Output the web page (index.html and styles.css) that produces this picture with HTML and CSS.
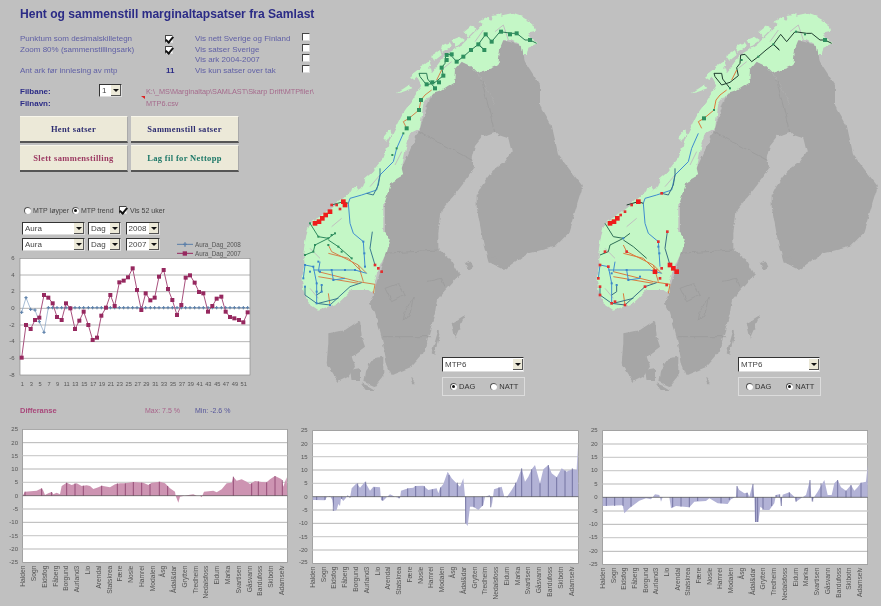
FILE: index.html
```html
<!DOCTYPE html>
<html lang="no">
<head>
<meta charset="utf-8">
<title>Hent og sammenstill marginaltapsatser fra Samlast</title>
<link rel="stylesheet" href="styles.css">
</head>
<body>
<svg class="defs" width="0" height="0" aria-hidden="true">
  <defs>
    <filter id="rough" x="-5%" y="-5%" width="110%" height="110%" color-interpolation-filters="sRGB">
      <feTurbulence type="fractalNoise" baseFrequency="0.045" numOctaves="3" seed="7" result="noise"/>
      <feDisplacementMap in="SourceGraphic" in2="noise" scale="13" xChannelSelector="R" yChannelSelector="G"/>
    </filter>
    <marker id="n-green" markerUnits="userSpaceOnUse" markerWidth="14" markerHeight="14" refX="7" refY="7"><rect x="1" y="1" width="12" height="12" fill="#2f8f5f"/></marker>
    <marker id="n-green-s" markerUnits="userSpaceOnUse" markerWidth="8" markerHeight="8" refX="4" refY="4"><rect x="1" y="1" width="6" height="6" fill="#2f8f5f"/></marker>
    <marker id="n-blue" markerUnits="userSpaceOnUse" markerWidth="8" markerHeight="8" refX="4" refY="4"><rect x="1" y="1" width="6" height="6" fill="#3a86c8"/></marker>
    <marker id="n-red" markerUnits="userSpaceOnUse" markerWidth="16" markerHeight="16" refX="8" refY="8"><rect x="1" y="1" width="14" height="14" fill="#ee1c1c"/></marker>
    <marker id="n-red-s" markerUnits="userSpaceOnUse" markerWidth="10" markerHeight="10" refX="5" refY="5"><rect x="1" y="1" width="8" height="8" fill="#e03030"/></marker>
    <marker id="pt-blue" markerUnits="userSpaceOnUse" markerWidth="12" markerHeight="12" refX="6" refY="6"><path d="M6 1V11M1 6H11" stroke="#5a7ea8" stroke-width="3"/></marker>
    <marker id="pt-red" markerUnits="userSpaceOnUse" markerWidth="14" markerHeight="14" refX="7" refY="7"><rect x="1" y="1" width="12" height="12" fill="#96285f"/></marker>

    <g id="land">
      <g filter="url(#rough)">
        <path class="land" d="M500 170L520 180 545 205 560 225 575 250 600 300 600 380 560 395 540 420 530 460 540 490 490 555 440 615 430 685 430 735 470 765 495 810 445 865 425 890 420 925 385 1045 350 1085 290 1110 275 1075 260 995 240 925 225 895 235 865 270 750 270 555 320 490 375 370 410 265Z"/>
        <path class="land" d="M620 105L680 120 690 170 735 240 735 300 770 360 790 450 860 540 860 555 820 685 780 725 700 745 630 795 580 770 565 715 545 605 545 570 560 540 590 500 630 470 650 440 640 400 610 390 600 380 600 300 575 250 560 225 545 205 575 195 610 180 615 130Z"/>
        <path class="land-dk" d="M100 1015L100 985 150 975 195 945 200 995 210 1025 170 1055 180 1085 160 1115 130 1130 95 1075Z"/>
        <path class="land-dk" d="M165 1095L195 1090 195 1125 170 1125Z"/>
        <path class="land-dk" d="M210 1095L235 1060 265 1055 265 1115 240 1145 205 1130Z"/>
        <path class="land-dk" d="M200 1135L225 1145 240 1155 215 1155Z"/>
        <path class="land-dk" d="M345 1115L360 1135 350 1135Z"/>
        <path class="land" d="M470 955L510 930 480 1000Z"/>
        <path class="land" d="M410 1045L430 975 435 980 418 1050Z"/>
        <path class="land" d="M510 775L525 765 535 785 520 795Z"/>
        <path class="land" d="M580 760L600 755 630 785 600 780Z"/>
        <path class="border" d="M370 380L530 465M270 745L430 735M600 385L560 225M260 995L410 995M270 850L310 835 330 870 290 890ZM330 920L355 875 345 930 325 945ZM395 830L440 820 450 845"/>
        <path class="norway" d="M625 30L650 25 680 35 715 55 720 80 700 85 725 115 700 125 695 150 685 150 680 120 650 105 625 105 615 130 610 180 575 195 545 205 520 180 500 170 480 195 478 230 440 255 410 265 385 300 375 370 345 385 335 420 320 490 325 510 290 530 270 590 265 595 265 680 270 680 285 700 270 750 245 805 235 865 220 855 170 855 130 895 70 915 40 895 25 855 20 820 30 785 25 745 35 685 45 655 100 615 150 575 165 570 200 550 240 490 265 460 280 420 290 390 320 330 352 285 385 232 420 190 450 150 500 120 530 90 570 50 600 40Z"/>
        <path class="norway" d="M505 80L530 60 545 70 520 95ZM470 105L495 95 510 105 480 125ZM435 125L465 112 470 125 445 140ZM405 155L435 135 440 150 415 170ZM375 185L405 165 410 180 385 205ZM345 215L378 190 385 200 358 225ZM305 265L345 238 355 250 320 262ZM550 50L580 35 590 45 565 60ZM265 400L285 375 290 385 275 410ZM205 525L240 495 250 505 215 535ZM150 570L185 545 190 555 160 580ZM590 30L620 25 615 55 595 60ZM360 205L405 190 415 235 380 245Z"/>
      </g>
      <path class="fjord" d="M640 105L625 60 600 80M540 110L565 75M445 190L470 170M300 480L320 440M225 545L255 510M140 640L110 665M70 880L45 850M45 730L75 760"/>
    </g>
    <g id="lines">
      <polyline class="ln north" points="725,115 705,105 690,105 665,85 650,85 615,80 590,110 572,88 550,118 568,135 550,118 528,135 505,155 485,170 465,148 452,150 450,175 440,188 445,212 420,232 395,240 375,215 372,205 395,205 398,222 420,250"/>
      <polyline class="ln or" points="440,195 425,225"/>
      <polyline class="ln or" points="410,255 390,270 378,285 372,315 342,340 325,350 335,370"/>
      <polyline class="ln bl" points="325,385 305,430 295,470 255,510 245,555 200,570 165,580 160,595 165,655 175,685 205,710 210,785"/>
      <polyline class="ln dk" points="255,490 255,510 250,540 235,570 215,565"/>
      <polyline class="ln dk" points="232,680 225,730 240,780"/>
      <polyline class="ln or" points="100,720 110,740 190,780 215,805"/>
      <polyline class="ln or" points="100,745 160,760 200,800"/>
      <polyline class="ln or" points="70,800 150,820 190,830 240,838 235,865"/>
      <polyline class="ln or" points="70,815 190,835"/>
      <polyline class="ln or" points="190,780 205,830"/>
      <polyline class="ln bl" points="25,820 30,780 55,785 65,835 65,895"/>
      <polyline class="ln bl" points="55,795 180,795 215,805"/>
      <polyline class="ln bl" points="75,770 70,800"/>
      <polyline class="ln bl" points="110,795 115,825 150,820"/>
      <polyline class="ln dk" points="30,845 30,870 65,895 105,900 165,845 200,833"/>
      <polyline class="ln or" points="100,865 105,900"/>
      <polyline class="ln dk" points="70,895 130,880"/>
      <polyline class="ln dk" points="80,840 80,860 65,870"/>
      <polyline class="ln gr" points="45,655 70,695 100,700 120,685"/>
      <polyline class="ln gr" points="100,705 130,725 170,760"/>
      <polyline class="ln gr" points="100,700 60,720 55,740 30,750"/>
      <polyline class="ln north" points="110,600 145,590 160,595"/>
    </g>
  </defs>
</svg>

<main class="page">
  <section class="top">
    <div class="panel">
      <h1 class="title">Hent og sammenstill marginaltapsatser fra Samlast</h1>

      <div class="options">
        <span>Punktum som desimalskilletegn</span><i class="cb on"></i><span>Vis nett Sverige og Finland</span><i class="cb"></i>
        <span>Zoom 80% (sammenstillingsark)</span><i class="cb on"></i><span>Vis satser Sverige</span><i class="cb"></i>
        <span></span><span></span><span>Vis ark 2004-2007</span><i class="cb"></i>
        <span>Ant ark før innlesing av mtp</span><b class="count">11</b><span>Vis kun satser over tak</span><i class="cb"></i>
      </div>

      <div class="file">
        <b class="file-label">Filbane:</b>
        <div class="combo combo-num"><span class="combo-text">1</span><i class="arrow"></i></div>
        <span class="file-path">K:\_MS\Marginaltap\SAMLAST\Skarp Drift\MTPfiler\</span>
        <b class="file-label">Filnavn:</b>
        <span class="file-name">MTP6.csv</span>
      </div>

      <div class="buttons">
        <button class="btn btn-blue">Hent satser</button>
        <button class="btn btn-blue">Sammenstill satser</button>
        <button class="btn btn-red">Slett sammenstilling</button>
        <button class="btn btn-teal">Lag fil for Nettopp</button>
      </div>

      <div class="modes">
        <i class="rb"></i><span class="mode-a">MTP løyper</span>
        <i class="rb on"></i><span class="mode-b">MTP trend</span>
        <i class="cb on"></i><span class="mode-c">Vis 52 uker</span>
      </div>

      <div class="selects">
        <div class="combos">
          <div class="combo-row">
            <div class="combo combo-name"><span class="combo-text">Aura</span><i class="arrow"></i></div>
            <div class="combo combo-kind"><span class="combo-text">Dag</span><i class="arrow"></i></div>
            <div class="combo combo-year"><span class="combo-text">2008</span><i class="arrow"></i></div>
          </div>
          <div class="combo-row">
            <div class="combo combo-name"><span class="combo-text">Aura</span><i class="arrow"></i></div>
            <div class="combo combo-kind"><span class="combo-text">Dag</span><i class="arrow"></i></div>
            <div class="combo combo-year"><span class="combo-text">2007</span><i class="arrow"></i></div>
          </div>
        </div>
        <div class="legend">
          <div class="legend-row"><svg width="16" height="7" viewBox="0 0 48 21"><path d="M0 10H48" stroke="#5a7ea8" stroke-width="3"/><path d="M24 4V17M18 10H30" stroke="#5a7ea8" stroke-width="4"/></svg><span>Aura_Dag_2008</span></div>
          <div class="legend-row"><svg width="16" height="7" viewBox="0 0 48 21"><path d="M0 10H48" stroke="#96285f" stroke-width="3"/><rect x="17" y="4" width="13" height="13" fill="#96285f"/></svg><span>Aura_Dag_2007</span></div>
        </div>
      </div>

      <svg class="trend" width="290" height="138" viewBox="0 180 870 414">
        <rect class="plot" x="60" y="190" width="690" height="350"/>
        <path class="grid" d="M60 240H750M60 290H750M60 340H750M60 390H750M60 440H750M60 490H750"/>
        <g class="axis">
          <text x="44" y="195">6</text><text x="44" y="245">4</text><text x="44" y="295">2</text><text x="44" y="345">0</text><text x="44" y="395">-2</text><text x="44" y="445">-4</text><text x="44" y="495">-6</text><text x="44" y="545">-8</text>
        </g>
        <g class="xaxis">
          <text x="67" y="572">1</text><text x="94" y="572">3</text><text x="120" y="572">5</text><text x="147" y="572">7</text><text x="173" y="572">9</text><text x="200" y="572">11</text><text x="226" y="572">13</text><text x="253" y="572">15</text><text x="280" y="572">17</text><text x="306" y="572">19</text><text x="333" y="572">21</text><text x="359" y="572">23</text><text x="386" y="572">25</text><text x="413" y="572">27</text><text x="439" y="572">29</text><text x="466" y="572">31</text><text x="492" y="572">33</text><text x="519" y="572">35</text><text x="546" y="572">37</text><text x="572" y="572">39</text><text x="599" y="572">41</text><text x="625" y="572">43</text><text x="652" y="572">45</text><text x="678" y="572">47</text><text x="705" y="572">49</text><text x="731" y="572">51</text>
        </g>
        <polyline class="s-blue" points="65,352 78,308 92,343 105,345 118,380 132,412 145,338 158,338 171,338 185,338 198,338 211,338 225,338 238,338 251,338 265,338 278,338 291,338 304,338 318,338 331,338 344,338 358,338 371,338 384,338 398,338 411,338 424,338 437,338 451,338 464,338 477,338 491,338 504,338 517,338 531,338 544,338 557,338 570,338 584,338 597,338 610,338 624,338 637,338 650,338 664,338 677,338 690,338 703,338 717,338 730,338 743,338"/>
        <polyline class="s-red" points="65,488 78,390 92,402 105,375 118,368 132,300 145,308 158,325 171,366 185,375 198,325 211,340 225,402 238,377 251,350 265,390 278,435 291,428 304,362 318,338 331,300 344,333 358,262 371,257 384,247 398,220 411,285 424,345 437,295 451,316 464,308 477,245 491,225 504,282 517,315 531,360 544,330 557,248 570,241 584,263 597,291 610,295 624,350 637,333 650,311 664,305 677,350 690,366 703,370 717,375 730,382 743,352"/>
      </svg>
    </div>

    <div class="map">
      <svg class="map-svg" width="295" height="404" viewBox="0 0 885 1212">
        <g transform="translate(0 15)">
          <use href="#land"/>
          <use href="#lines" class="net-dag"/>
          <polyline class="nodes" marker-start="url(#n-green)" marker-mid="url(#n-green)" marker-end="url(#n-green)" points="705,105 665,85 645,88 618,80 590,110 572,88 550,118 568,135 528,135 505,155 485,170 470,148 455,150 455,165 440,188 445,212 432,232 412,232 395,238 420,250 378,285 372,315 342,340 335,370"/>
          <polyline class="nodes" marker-mid="url(#n-red)" marker-start="url(#n-red)" marker-end="url(#n-red)" points="60,655 72,650 82,640 92,630 105,620 145,590 150,600"/>
          <polyline class="nodes" marker-mid="url(#n-red-s)" marker-start="url(#n-red-s)" marker-end="url(#n-red-s)" points="110,600 125,600 135,612 240,780 250,790 260,800"/>
          <polyline class="nodes" marker-mid="url(#n-blue)" marker-start="url(#n-blue)" marker-end="url(#n-blue)" points="25,820 30,780 55,785 65,835 65,860 65,895 105,900 75,800 110,795 150,795 180,795 205,710 208,745 210,785 80,840 80,860 45,800 115,825 30,845 70,770"/>
          <polyline class="nodes" marker-mid="url(#n-green-s)" marker-start="url(#n-green-s)" marker-end="url(#n-green-s)" points="45,655 70,695 100,700 120,685 110,690 60,720 55,740 30,750 100,720 130,725 140,740 170,760 325,385 305,430 292,450"/>
        </g>
      </svg>
      <div class="map-controls">
        <div class="combo combo-map"><span class="combo-text">MTP6</span><i class="arrow"></i></div>
        <div class="daynight">
          <i class="rb on"></i><span class="dn-a">DAG</span><i class="rb"></i><span>NATT</span>
        </div>
      </div>
    </div>

    <div class="map map-natt">
      <svg class="map-svg" width="291" height="404" viewBox="0 0 873 1212">
        <g transform="translate(0 15)">
          <use href="#land"/>
          <use href="#lines" class="net-natt"/>
          <polyline class="nodes" marker-start="url(#n-green)" marker-mid="url(#n-green-s)" marker-end="url(#n-green)" points="705,105 645,88 618,80 550,118 505,155 455,165 420,250 372,315 342,340"/>
          <polyline class="nodes" marker-mid="url(#n-red)" marker-start="url(#n-red)" marker-end="url(#n-red)" points="60,655 72,650 82,640 145,590 240,780 250,790 260,800 195,800"/>
          <polyline class="nodes" marker-mid="url(#n-red-s)" marker-start="url(#n-red-s)" marker-end="url(#n-red-s)" points="92,630 105,620 125,600 215,565 232,680 205,710 25,820 30,780 55,785 30,845 30,870 65,895 75,890 105,900 165,845 215,790 210,820 230,840 110,740 45,740"/>
          <polyline class="nodes" marker-mid="url(#n-blue)" marker-start="url(#n-blue)" marker-end="url(#n-blue)" points="65,805 65,835 110,795 150,815 205,725 208,745 100,700 80,840 115,825"/>
        </g>
      </svg>
      <div class="map-controls">
        <div class="combo combo-map"><span class="combo-text">MTP6</span><i class="arrow"></i></div>
        <div class="daynight">
          <i class="rb"></i><span class="dn-a">DAG</span><i class="rb on"></i><span>NATT</span>
        </div>
      </div>
    </div>
  </section>

  <section class="diff-head">
    <b class="diff-title">Differanse</b>
    <span class="diff-max">Max: 7.5 %</span>
    <span class="diff-min">Min: -2.6 %</span>
  </section>

  <section class="bars">
    <svg class="bar-chart" width="295" height="190" viewBox="0 48 885 570">
      <rect class="plot" x="68" y="88" width="794" height="399"/>
      <path class="grid-l" d="M68 167H862M68 247H862M68 327H862M68 407H862M68 447H862"/>
      <path class="grid" d="M68 128H862M68 207H862M68 367H862"/>
      <path class="fill-pink" d="M68 287L75 275 110 272 125 265 130 272 135 285 145 280 155 276 160 283 170 278 180 283 185 258 200 248 215 255 230 250 245 258 260 256 270 258 280 267 295 262 305 257 330 262 345 253 360 250 375 250 400 246 430 248 445 255 455 248 480 245 495 250 510 265 525 275 527 287 530 295 535 308 540 290 550 288 570 284 580 283 590 287 600 287 605 292 612 275 640 272 650 277 665 268 680 250 695 248 700 230 710 242 725 238 740 245 750 252 765 243 785 246 800 247 810 238 825 228 845 238 850 260 860 232 862 287Z"/>
      <path class="stems-pink" d="M75 287V275M125 287V265M155 287V276M200 287V248M225 287V250M250 287V257M305 287V257M352 287V250M376 287V250M400 287V246M425 287V248M450 287V252M478 287V245M503 287V258M700 287V230M755 287V250M775 287V244M800 287V247M825 287V228M847 287V240"/>
      <path class="zero" d="M68 287H862"/>
      <g class="axis">
        <text x="54" y="94">25</text><text x="54" y="134">20</text><text x="54" y="173">15</text><text x="54" y="213">10</text><text x="54" y="253">5</text><text x="54" y="293">0</text><text x="54" y="333">-5</text><text x="54" y="373">-10</text><text x="54" y="413">-15</text><text x="54" y="453">-20</text><text x="54" y="493">-25</text>
      </g>
      <g class="cats">
        <text transform="translate(76 497) rotate(-90)">Halden</text><text transform="translate(108 497) rotate(-90)">Sogn</text><text transform="translate(141 497) rotate(-90)">Eidsfog</text><text transform="translate(173 497) rotate(-90)">Fåberg</text><text transform="translate(205 497) rotate(-90)">Borgund</text><text transform="translate(238 497) rotate(-90)">Aurland3</text><text transform="translate(270 497) rotate(-90)">Lio</text><text transform="translate(302 497) rotate(-90)">Arendal</text><text transform="translate(335 497) rotate(-90)">Statskrea</text><text transform="translate(367 497) rotate(-90)">Fære</text><text transform="translate(399 497) rotate(-90)">Nosle</text><text transform="translate(431 497) rotate(-90)">Hamrei</text><text transform="translate(464 497) rotate(-90)">Modalen</text><text transform="translate(496 497) rotate(-90)">Åsg</text><text transform="translate(528 497) rotate(-90)">Ådal&amp;dar</text><text transform="translate(561 497) rotate(-90)">Grytten</text><text transform="translate(593 497) rotate(-90)">Tredheim</text><text transform="translate(625 497) rotate(-90)">Nedalsfoss</text><text transform="translate(658 497) rotate(-90)">Eidum</text><text transform="translate(690 497) rotate(-90)">Marka</text><text transform="translate(722 497) rotate(-90)">Svartisen</text><text transform="translate(755 497) rotate(-90)">Gåsvann</text><text transform="translate(787 497) rotate(-90)">Bardufoss</text><text transform="translate(819 497) rotate(-90)">Skibotn</text><text transform="translate(852 497) rotate(-90)">Adamselv</text>
      </g>
    </svg>

    <svg class="bar-chart" width="286" height="190" viewBox="0 48 858 570">
      <rect class="plot" x="53" y="92" width="797" height="398"/>
      <path class="grid-l" d="M53 131H850M53 170H850M53 250H850M53 330H850M53 410H850M53 450H850"/>
      <path class="grid" d="M53 210H850M53 370H850"/>
      <path class="fill-blue" d="M53 290L53 300 60 300 90 301 95 292 105 288 112 300 118 333 125 330 130 312 135 318 138 295 145 303 152 295 158 285 165 293 170 265 185 250 195 263 210 245 225 272 235 260 255 262 258 300 265 302 275 292 285 283 300 290 315 295 318 272 340 265 355 263 360 258 385 257 400 270 410 268 425 265 430 280 435 265 445 252 458 215 470 235 480 245 495 260 505 235 510 290 512 370 518 378 525 320 535 320 550 330 565 315 570 290 585 285 590 322 597 268 620 260 628 290 635 292 650 270 665 245 680 205 690 245 700 230 710 208 720 195 735 250 745 208 760 195 770 220 785 232 800 205 815 215 820 212 835 208 845 210 848 140 850 290Z"/>
      <path class="stems-blue" d="M65 290V300M90 290V300M115 290V333M140 290V297M165 290V293M188 290V250M212 290V245M238 290V262M262 290V302M312 290V295M338 290V265M362 290V258M388 290V258M412 290V268M437 290V262M462 290V225M487 290V248M512 290V370M537 290V322M562 290V318M587 290V322M612 290V262M637 290V292M662 290V248M680 290V205M710 290V208M735 290V250M760 290V195M785 290V232M810 290V212M832 290V205"/>
      <path class="zero" d="M53 290H850"/>
      <g class="axis">
        <text x="38" y="96">25</text><text x="38" y="137">20</text><text x="38" y="176">15</text><text x="38" y="216">10</text><text x="38" y="256">5</text><text x="38" y="296">0</text><text x="38" y="336">-5</text><text x="38" y="376">-10</text><text x="38" y="416">-15</text><text x="38" y="456">-20</text><text x="38" y="492">-25</text>
      </g>
      <g class="cats">
        <text transform="translate(60 500) rotate(-90)">Halden</text><text transform="translate(92 500) rotate(-90)">Sogn</text><text transform="translate(124 500) rotate(-90)">Eidsfog</text><text transform="translate(157 500) rotate(-90)">Fåberg</text><text transform="translate(189 500) rotate(-90)">Borgund</text><text transform="translate(221 500) rotate(-90)">Aurland3</text><text transform="translate(254 500) rotate(-90)">Lio</text><text transform="translate(286 500) rotate(-90)">Arendal</text><text transform="translate(318 500) rotate(-90)">Statskrea</text><text transform="translate(351 500) rotate(-90)">Fære</text><text transform="translate(383 500) rotate(-90)">Nosle</text><text transform="translate(415 500) rotate(-90)">Hamrei</text><text transform="translate(448 500) rotate(-90)">Modalen</text><text transform="translate(480 500) rotate(-90)">Åsg</text><text transform="translate(512 500) rotate(-90)">Ådal&amp;dar</text><text transform="translate(545 500) rotate(-90)">Grytten</text><text transform="translate(577 500) rotate(-90)">Tredheim</text><text transform="translate(609 500) rotate(-90)">Nedalsfoss</text><text transform="translate(642 500) rotate(-90)">Eidum</text><text transform="translate(674 500) rotate(-90)">Marka</text><text transform="translate(706 500) rotate(-90)">Svartisen</text><text transform="translate(739 500) rotate(-90)">Gåsvann</text><text transform="translate(771 500) rotate(-90)">Bardufoss</text><text transform="translate(803 500) rotate(-90)">Skibotn</text><text transform="translate(836 500) rotate(-90)">Adamselv</text>
      </g>
    </svg>

    <svg class="bar-chart" width="300" height="190" viewBox="0 48 900 570">
      <rect class="plot" x="65" y="92" width="795" height="401"/>
      <path class="grid-l" d="M65 132H860M65 172H860M65 212H860M65 252H860M65 333H860M65 413H860"/>
      <path class="grid" d="M65 373H860M65 454H860"/>
      <path class="fill-blue" d="M65 292L65 318 125 316 130 340 145 325 165 310 175 302 195 295 210 298 222 283 235 285 240 305 245 292 265 292 270 325 285 318 325 322 340 305 375 303 385 295 410 310 440 312 450 298 465 290 468 258 475 270 490 280 500 278 505 290 515 252 520 292 522 366 532 366 538 320 550 330 565 330 580 310 585 285 595 283 600 318 605 284 625 277 640 290 645 305 660 295 675 285 687 240 692 305 700 290 710 275 730 240 740 285 752 285 760 250 770 240 780 262 795 272 810 255 820 272 830 262 840 248 855 245 860 195 860 292Z"/>
      <path class="stems-blue" d="M76 292V318M101 292V318M126 292V318M150 292V320M275 292V322M300 292V320M325 292V322M350 292V303M420 292V310M445 292V300M468 292V258M498 292V278M516 292V252M524 292V366M530 292V366M546 292V330M572 292V318M585 292V285M596 292V283M601 292V318M625 292V277M645 292V305M687 292V240M695 292V305M720 292V250M770 292V240M795 292V272M810 292V255M840 292V248"/>
      <path class="zero" d="M65 292H860"/>
      <g class="axis">
        <text x="50" y="96">25</text><text x="50" y="137">20</text><text x="50" y="177">15</text><text x="50" y="217">10</text><text x="50" y="257">5</text><text x="50" y="298">0</text><text x="50" y="338">-5</text><text x="50" y="378">-10</text><text x="50" y="418">-15</text><text x="50" y="458">-20</text><text x="50" y="498">-25</text>
      </g>
      <g class="cats">
        <text transform="translate(72 503) rotate(-90)">Halden</text><text transform="translate(104 503) rotate(-90)">Sogn</text><text transform="translate(136 503) rotate(-90)">Eidsfog</text><text transform="translate(168 503) rotate(-90)">Fåberg</text><text transform="translate(200 503) rotate(-90)">Borgund</text><text transform="translate(232 503) rotate(-90)">Aurland3</text><text transform="translate(264 503) rotate(-90)">Lio</text><text transform="translate(296 503) rotate(-90)">Arendal</text><text transform="translate(328 503) rotate(-90)">Statskrea</text><text transform="translate(360 503) rotate(-90)">Fære</text><text transform="translate(392 503) rotate(-90)">Nosle</text><text transform="translate(424 503) rotate(-90)">Hamrei</text><text transform="translate(456 503) rotate(-90)">Modalen</text><text transform="translate(489 503) rotate(-90)">Åsg</text><text transform="translate(521 503) rotate(-90)">Ådal&amp;dar</text><text transform="translate(553 503) rotate(-90)">Grytten</text><text transform="translate(585 503) rotate(-90)">Tredheim</text><text transform="translate(617 503) rotate(-90)">Nedalsfoss</text><text transform="translate(650 503) rotate(-90)">Eidum</text><text transform="translate(682 503) rotate(-90)">Marka</text><text transform="translate(714 503) rotate(-90)">Svartisen</text><text transform="translate(747 503) rotate(-90)">Gåsvann</text><text transform="translate(779 503) rotate(-90)">Bardufoss</text><text transform="translate(811 503) rotate(-90)">Skibotn</text><text transform="translate(843 503) rotate(-90)">Adamselv</text>
      </g>
    </svg>
  </section>
</main>
</body>
</html>
```

FILE: styles.css
```css
* { box-sizing: border-box; }
html, body { margin: 0; padding: 0; }
body {
  width: 881px;
  height: 606px;
  overflow: hidden;
  background: #c0c0c0;
  font-family: "Liberation Sans", Arial, sans-serif;
  font-size: 8px;
  color: #55559a;
}
.defs { position: absolute; }
.page { display: block; filter: blur(0.35px); }

.top {
  display: grid;
  grid-template-columns: 295px 295px 291px;
  height: 404px;
}
.panel { position: relative; z-index: 1; width: 295px; height: 404px; }

.title {
  margin: 7px 0 0 20px;
  width: 310px;
  font-size: 12.1px;
  line-height: 15px;
  font-weight: bold;
  color: #2b2b86;
  white-space: nowrap;
}

.options {
  display: grid;
  grid-template-columns: 145px 30px 107px 10px;
  grid-auto-rows: 10.5px;
  margin: 12px 0 0 20px;
  width: 300px;
  align-items: center;
  line-height: 10px;
  white-space: nowrap;
  color: #5f5fa5;
}
.options .cb:nth-child(4n) { align-self: start; margin-top: -1px; }
.count { color: #2b2b86; font-size: 8px; padding-left: 1px; }

.cb {
  display: inline-block;
  width: 8px;
  height: 8px;
  background: #fff;
  border-top: 1px solid #444;
  border-left: 1px solid #444;
  border-right: 1px solid #ddd;
  border-bottom: 1px solid #ddd;
  position: relative;
}
.cb.on::after {
  content: "";
  position: absolute;
  left: 1px;
  top: -1px;
  width: 3px;
  height: 6px;
  border-right: 2px solid #111;
  border-bottom: 2px solid #111;
  transform: rotate(40deg);
}

.file {
  display: grid;
  grid-template-columns: 79px 47px auto;
  grid-auto-rows: 12px;
  margin: 9px 0 0 20px;
  width: 320px;
  align-items: center;
  white-space: nowrap;
}
.file-label { color: #2b2b86; font-size: 8px; }
.file-path, .file-name { grid-column: 3; color: #a56a8c; font-size: 7.3px; position: relative; }
.file .file-label:nth-of-type(2) { grid-column: 1; grid-row: 2; }
.file-name { grid-row: 2; }
.file-name::before {
  content: "";
  position: absolute;
  left: -5px;
  top: -3px;
  border-top: 3px solid #d22;
  border-left: 4px solid transparent;
}

.combo {
  display: flex;
  align-items: center;
  height: 13px;
  background: #fff;
  border-top: 1px solid #333;
  border-left: 1px solid #333;
  border-right: 1px solid #ddd;
  border-bottom: 1px solid #ddd;
  color: #444;
  font-size: 8px;
  line-height: 11px;
}
.combo-text { flex: 1; padding-left: 2px; }
.arrow {
  width: 10px;
  height: 11px;
  background: #ece9d8;
  border-right: 1px solid #555;
  border-bottom: 1px solid #555;
  position: relative;
}
.arrow::after {
  content: "";
  position: absolute;
  left: 2px;
  top: 4px;
  border-top: 3px solid #111;
  border-left: 3px solid transparent;
  border-right: 3px solid transparent;
}
.combo-num { width: 23px; margin-top: -2px; }

.buttons {
  display: grid;
  grid-template-columns: 108px 108px;
  grid-auto-rows: 27px;
  gap: 2px 3px;
  margin: 7px 0 0 20px;
}
.btn {
  padding: 0;
  background: #ece9d8;
  border: 0;
  border-right: 1px solid #aaa;
  border-bottom: 2px solid #555;
  border-top: 1px solid #f8f6ea;
  font-family: "Liberation Serif", serif;
  font-weight: bold;
  font-size: 8.5px;
  letter-spacing: 0.35px;
  white-space: nowrap;
}
.btn-blue { color: #2e2e72; }
.btn-red { color: #9c3a62; }
.btn-teal { color: #1d7868; }

.modes {
  display: flex;
  align-items: center;
  height: 10px;
  margin: 33px 0 0 24px;
  color: #444;
  font-size: 7px;
  white-space: nowrap;
}
.rb {
  display: inline-block;
  flex: none;
  width: 7px;
  height: 7px;
  border-radius: 50%;
  background: #fff;
  border-top: 1px solid #555;
  border-left: 1px solid #555;
  position: relative;
}
.rb.on::after {
  content: "";
  position: absolute;
  left: 1px;
  top: 1px;
  width: 3px;
  height: 3px;
  border-radius: 50%;
  background: #111;
}
.modes .rb { margin-right: 2px; }
.mode-a { width: 39px; }
.mode-b { width: 38px; }
.modes .cb { margin-right: 3px; }

.selects { display: flex; align-items: flex-end; height: 33px; margin: 7px 0 0 22px; padding-bottom: 4px; }
.combos { display: flex; flex-direction: column; gap: 3px; width: 138px; }
.combo-row { display: flex; gap: 3px; }
.combo-name { width: 64px; }
.combo-kind { width: 33px; }
.combo-year { width: 35px; margin-left: 2px; }
.legend { margin: 0 0 -7px 17px; color: #555; font-size: 6.3px; }
.legend-row { display: flex; align-items: center; gap: 2px; height: 9px; white-space: nowrap; }

.trend { display: block; }
.plot { fill: #fff; stroke: #8a8a8a; stroke-width: 2; }
.grid { stroke: #8f8f8f; stroke-width: 2; fill: none; }
.grid-l { stroke: #cfcfcf; stroke-width: 4; fill: none; }
.axis text { font-size: 18px; fill: #555; text-anchor: end; }
.xaxis text { font-size: 17px; fill: #555; text-anchor: middle; }
.cats text { font-size: 20px; fill: #555; text-anchor: end; }
.s-blue { fill: none; stroke: #7b9bc0; stroke-width: 2; marker: url(#pt-blue); }
.s-red { fill: none; stroke: #a8507d; stroke-width: 3; marker: url(#pt-red); }

.map { position: relative; height: 404px; }
.map-svg { display: block; }
.land { fill: #a6a6a6; }
.land-dk { fill: #a6a6a6; }
.border { fill: none; stroke: #999; stroke-width: 2; }
.norway { fill: #c4f7c6; }
.fjord { fill: none; stroke: #c0c0c0; stroke-width: 3; }
.ln { fill: none; stroke-width: 3; }
.net-dag { --north: #2a7a55; --or: #d4824c; --bl: #3f8cd0; --dk: #3b7b90; --gr: #2e8a5e; }
.net-natt { --north: #1f3d2e; --or: #dc7a3c; --bl: #3f8cd0; --dk: #3a6f84; --gr: #2e6f55; }
.north { stroke: var(--north); }
.or { stroke: var(--or); }
.bl { stroke: var(--bl); }
.dk { stroke: var(--dk); }
.gr { stroke: var(--gr); }
.nodes { fill: none; stroke: none; }

.map-controls { position: absolute; left: 147px; top: 357px; width: 83px; }
.map-natt .map-controls { left: 148px; }
.combo-map { height: 15px; width: 82px; }
.daynight {
  display: flex;
  align-items: center;
  height: 19px;
  margin-top: 5px;
  padding-left: 7px;
  border: 1px solid #dcdcdc;
  color: #333;
  font-size: 7.5px;
}
.daynight .rb { margin-right: 2px; }
.dn-a { margin-right: 15px; }

.diff-head {
  display: flex;
  align-items: center;
  height: 12px;
  padding-left: 20px;
  white-space: nowrap;
  font-size: 7px;
}
.diff-title { width: 125px; color: #a8477a; font-size: 7.5px; }
.diff-max { width: 50px; color: #a8628a; }
.diff-min { color: #55559a; }

.bars { display: flex; }
.bar-chart { display: block; flex: none; }
.fill-pink { fill: #cd94b2; }
.fill-blue { fill: #b2b2d6; }
.stems-pink { stroke: #7a2a5a; stroke-width: 2; fill: none; }
.stems-blue { stroke: #55558a; stroke-width: 2; fill: none; }
.zero { stroke: #444; stroke-width: 2; fill: none; }
```
